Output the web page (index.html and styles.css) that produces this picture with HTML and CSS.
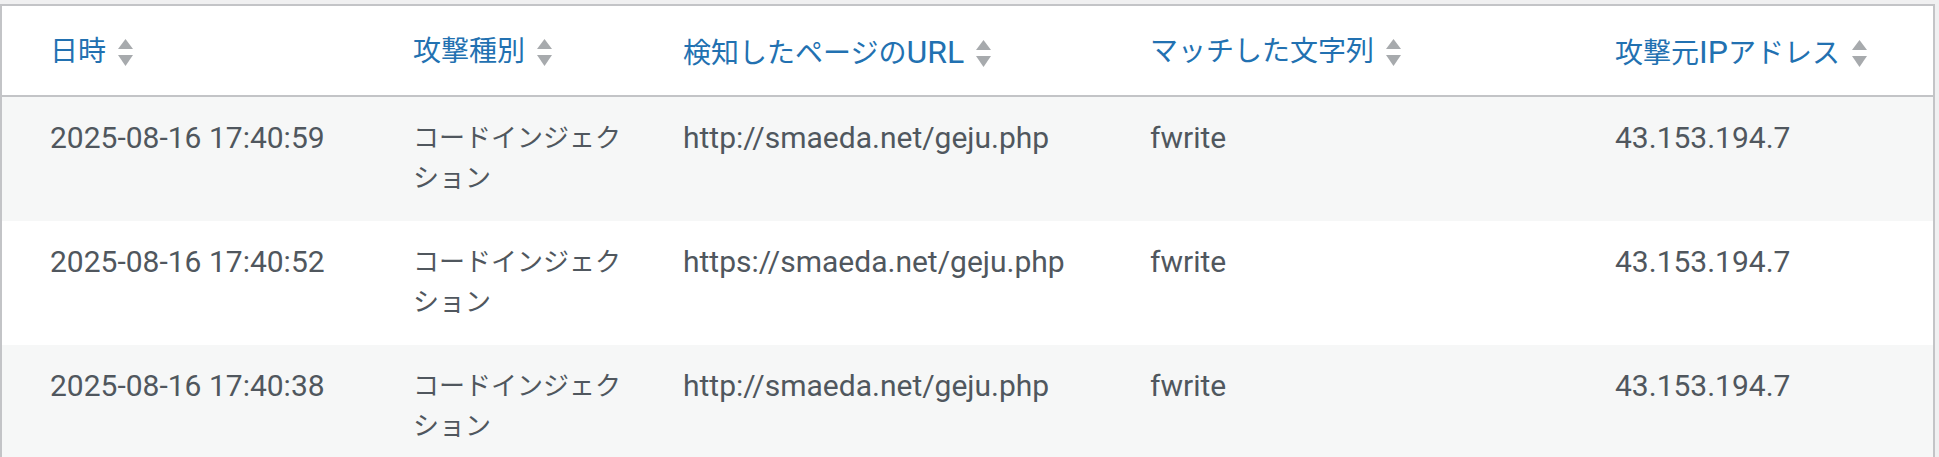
FILE: index.html
```html
<!DOCTYPE html>
<html lang="ja">
<head>
<meta charset="utf-8">
<title>攻撃ログ</title>
<link rel="stylesheet" href="styles.css">
</head>
<body>
<table class="log-table">
  <thead>
    <tr>
      <th class="col-date"><span class="sortable">日時<svg class="sort-icon" viewBox="0 0 15 27" width="15" height="27"><polygon points="0,10 7.5,0 15,10"/><polygon points="0,16 15,16 7.5,27"/></svg></span></th>
      <th class="col-type"><span class="sortable">攻撃種別<svg class="sort-icon" viewBox="0 0 15 27" width="15" height="27"><polygon points="0,10 7.5,0 15,10"/><polygon points="0,16 15,16 7.5,27"/></svg></span></th>
      <th class="col-url"><span class="sortable"><span>検知したページの<span class="en">URL</span></span><svg class="sort-icon" viewBox="0 0 15 27" width="15" height="27"><polygon points="0,10 7.5,0 15,10"/><polygon points="0,16 15,16 7.5,27"/></svg></span></th>
      <th class="col-match"><span class="sortable">マッチした文字列<svg class="sort-icon" viewBox="0 0 15 27" width="15" height="27"><polygon points="0,10 7.5,0 15,10"/><polygon points="0,16 15,16 7.5,27"/></svg></span></th>
      <th class="col-ip"><span class="sortable"><span>攻撃元<span class="en">IP</span>アドレス</span><svg class="sort-icon" viewBox="0 0 15 27" width="15" height="27"><polygon points="0,10 7.5,0 15,10"/><polygon points="0,16 15,16 7.5,27"/></svg></span></th>
    </tr>
  </thead>
  <tbody>
    <tr class="alt">
      <td>2025-08-16 17:40:59</td>
      <td class="ja">コードインジェクション</td>
      <td>http://smaeda.net/geju.php</td>
      <td>fwrite</td>
      <td>43.153.194.7</td>
    </tr>
    <tr>
      <td>2025-08-16 17:40:52</td>
      <td class="ja">コードインジェクション</td>
      <td>https://smaeda.net/geju.php</td>
      <td>fwrite</td>
      <td>43.153.194.7</td>
    </tr>
    <tr class="alt">
      <td>2025-08-16 17:40:38</td>
      <td class="ja">コードインジェクション</td>
      <td>http://smaeda.net/geju.php</td>
      <td>fwrite</td>
      <td>43.153.194.7</td>
    </tr>
  </tbody>
</table>
</body>
</html>
```

FILE: styles.css
```css
html, body {
  margin: 0;
  padding: 0;
  background: #f0f0f1;
}

body {
  padding-top: 4px;
  font-family: "Roboto", "Noto Sans CJK JP", sans-serif;
  font-size: 26px;
  line-height: 40px;
  overflow: hidden;
}

.log-table {
  width: 1935px;
  table-layout: fixed;
  border-collapse: separate;
  border-spacing: 0;
  border: 2px solid #c3c4c7;
  background: #fff;
}

.log-table th,
.log-table td {
  box-sizing: border-box;
  padding: 0 24px;
  text-align: left;
  vertical-align: top;
}

.log-table th:first-child,
.log-table td:first-child {
  padding-left: 48px;
}

.log-table th {
  height: 87px;
  padding-top: 26px;
  padding-bottom: 21px;
  font-size: 28px;
  font-weight: normal;
  color: #2271b1;
  border-bottom: 2px solid #c3c4c7;
  white-space: nowrap;
}

.log-table th .en {
  font-size: 32px;
}

.col-date { width: 387px; }
.col-type { width: 270px; }
.col-url { width: 467px; }
.col-match { width: 465px; }
.col-ip { width: 342px; }

.sortable {
  display: inline-flex;
  align-items: center;
  gap: 12px;
}

.sort-icon {
  fill: #a7aaad;
  flex: none;
}

.log-table td {
  height: 124px;
  padding-top: 21px;
  padding-bottom: 23px;
  font-size: 30px;
  color: #50575e;
}

.log-table td.ja {
  font-size: 26px;
}

.log-table tr.alt td {
  background: #f6f7f7;
}
```
